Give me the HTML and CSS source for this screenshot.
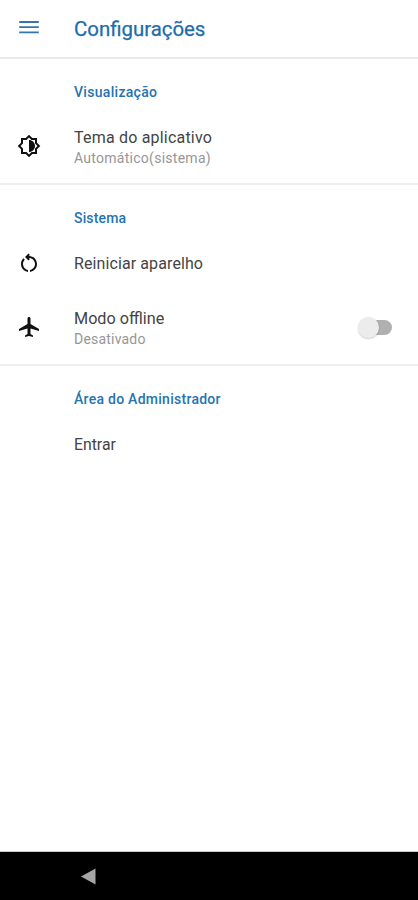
FILE: index.html
```html
<!DOCTYPE html>
<html lang="pt-BR">
<head>
<meta charset="utf-8">
<meta name="viewport" content="width=device-width, initial-scale=1">
<title>Configurações</title>
<link rel="stylesheet" href="styles.css">
</head>
<body>
<header class="bar">
  <svg class="icon menu" viewBox="0 0 24 24"><path d="M2.200 18.300h19.600v-1.900H2.200zm0-5.200h19.600v-1.900H2.200zm0-7.100v1.900h19.600V6z"/></svg>
  <h1>Configurações</h1>
</header>
<main>
  <section class="display">
    <h2 class="view">Visualização</h2>
    <div class="row double">
      <svg class="icon" viewBox="0 0 24 24"><path d="M20 15.31L23.31 12 20 8.69V4h-4.69L12 .69 8.69 4H4v4.69L.69 12 4 15.31V20h4.69L12 23.31 15.31 20H20v-4.69zm-2-.83V18h-3.52L12 20.48 9.52 18H6v-3.52L3.52 12 6 9.52V6h3.52L12 3.52 14.48 6H18v3.52L20.48 12 18 14.48zM12 6v12c3.31 0 6-2.69 6-6s-2.69-6-6-6z"/></svg>
      <div class="text"><p class="title theme">Tema do aplicativo</p><p class="sub auto">Automático(sistema)</p></div>
    </div>
  </section>
  <section class="system">
    <h2>Sistema</h2>
    <div class="row single">
      <svg class="icon" viewBox="0 0 24 24"><path d="M6 13c0-1.65.67-3.15 1.76-4.24L6.34 7.34C4.9 8.79 4 10.79 4 13c0 4.08 3.05 7.44 7 7.93v-2.02c-2.83-.48-5-2.94-5-5.91zm14 0c0-4.42-3.58-8-8-8-.06 0-.12.01-.18.01l1.09-1.09L11.5 2.5 8 6l3.5 3.5 1.41-1.41-1.08-1.08c.06 0 .12-.01.17-.01 3.31 0 6 2.69 6 6 0 2.97-2.17 5.43-5 5.91v2.02c3.95-.49 7-3.85 7-7.93z"/></svg>
      <div class="text"><p class="title restart">Reiniciar aparelho</p></div>
    </div>
    <div class="row double">
      <svg class="icon" viewBox="0 0 24 24"><path d="M22 16v-2l-8.500-5V3.500c0-.83-.67-1.500-1.500-1.500s-1.500.670-1.500 1.500V9L2 14v2l8.500-2.500V19L8 20.500V22l4-1 4 1v-1.500L13.500 19v-5.500L22 16z"/></svg>
      <div class="text"><p class="title offline">Modo offline</p><p class="sub">Desativado</p></div>
      <span class="switch" role="switch" aria-checked="false"></span>
    </div>
  </section>
  <section class="admin">
    <h2 class="area">Área do Administrador</h2>
    <div class="row single"><div class="text"><p class="title enter">Entrar</p></div></div>
  </section>
</main>
<footer class="nav"><svg viewBox="0 0 16 18"><path d="M15.500 .5v16L1 8.500z"/></svg></footer>
</body>
</html>
```
FILE: styles.css
```css
* { box-sizing: border-box; margin: 0; }
body { height: 900px; display: flex; flex-direction: column; overflow: hidden; background: #fff; font-family: Roboto, sans-serif; color: #444; }
main { flex: 1; }
.bar { height: 59px; display: flex; align-items: center; border-bottom: 2px solid #eaeaea; color: #1b6dac; }
.icon { width: 24px; height: 24px; margin: 0 33px 0 17px; fill: #111; flex: none; }
.menu { fill: #3275b0; margin-top: -3px; }
h1 { font-size: 20.4px; line-height: 24px; font-weight: 400; -webkit-text-stroke: .25px #1b6dac; }
h2 { padding: 23px 0 0 74px; height: 49px; font-size: 14px; line-height: 20px; font-weight: 500; color: #2474b3; letter-spacing: .15px; }
.view { height: 52px; letter-spacing: .3px; }
.area { letter-spacing: .27px; }
.display { height: 126px; border-bottom: 2px solid #eee; }
.system { height: 181px; border-bottom: 2px solid #eee; }
.row { display: flex; align-items: center; }
.single { height: 58px; }
.double { height: 70px; }
.text { flex: 1; }
.double .text { padding-top: 3px; }
.title { font-size: 16px; line-height: 21px; }
.enter { font-size: 15.8px; }
.theme { letter-spacing: .2px; }
.restart { letter-spacing: .1px; }
.offline { font-size: 16.2px; }
.sub { font-size: 14px; line-height: 21px; color: #969696; letter-spacing: .2px; }
.auto { letter-spacing: .27px; }
.admin .text { padding-left: 74px; }
.switch { position: relative; width: 30px; height: 15px; margin-right: 26px; border-radius: 8px; background: #b0b0b0; }
.switch::before { content: ""; position: absolute; left: -4px; top: -3px; width: 21px; height: 21px; border-radius: 50%; background: #ececec; box-shadow: 0 1px 2px #0003; }
.nav { height: 48px; background: #000; box-shadow: 0 -1px #ccc; display: flex; align-items: center; padding: 1px 0 0 80px; }
.nav svg { width: 16px; height: 18px; fill: #a5a5a5; }
```
